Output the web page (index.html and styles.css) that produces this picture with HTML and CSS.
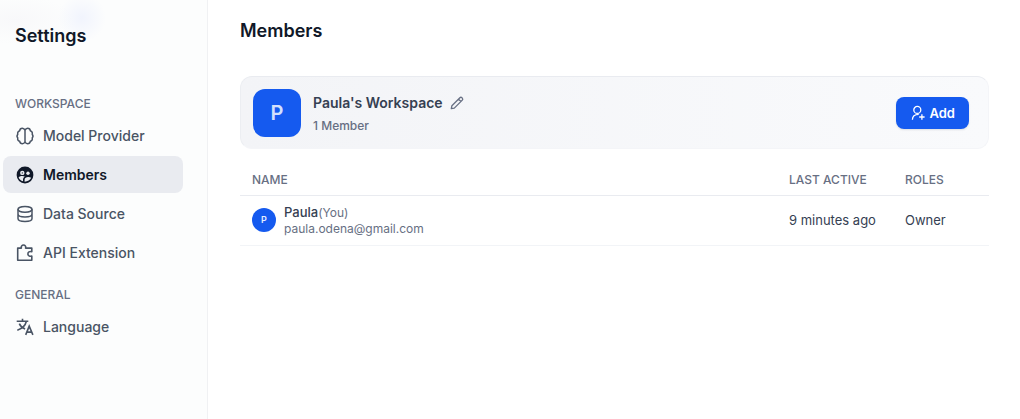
FILE: index.html
```html
<!DOCTYPE html>
<html lang="en">
<head>
<meta charset="utf-8">
<meta name="viewport" content="width=device-width, initial-scale=1">
<title>Settings – Members</title>
<link rel="stylesheet" href="styles.css">
</head>
<body>
<div class="settings">
  <aside class="sidebar">
    <h1 class="sidebar-title">Settings</h1>
    <nav class="nav">
      <section class="nav-group">
        <h2 class="nav-label">WORKSPACE</h2>
        <a class="nav-item" href="#provider">
          <svg class="nav-icon" viewBox="0 0 20 20" fill="none" stroke="currentColor" stroke-width="1.5" stroke-linejoin="round" aria-hidden="true">
            <path d="M10 4.3C9.5 2.9 8.4 2.3 7.4 2.3 5.8 2.3 4.8 3.4 4.7 4.8 3 5.3 2.3 6.700 2.800 8.200 1.900 9.300 1.900 10.900 2.800 11.900 2.300 13.500 3.100 14.900 4.700 15.300 4.900 16.800 5.900 17.700 7.400 17.700 8.500 17.700 9.500 17 10 15.700 10.500 17 11.500 17.700 12.600 17.700 14.100 17.700 15.100 16.800 15.300 15.300 16.900 14.900 17.700 13.500 17.200 11.900 18.100 10.900 18.100 9.300 17.200 8.200 17.700 6.700 17 5.300 15.300 4.800 15.200 3.400 14.200 2.300 12.600 2.300 11.600 2.300 10.500 2.900 10 4.300V15.700"/>
          </svg>
          <span>Model Provider</span>
        </a>
        <a class="nav-item active" href="#members" aria-current="page">
          <svg class="nav-icon" viewBox="0 0 20 20" aria-hidden="true">
            <circle cx="10" cy="10" r="8.4" fill="currentColor"/>
            <g fill="#e9ebf0">
              <circle cx="7.300" cy="7.900" r="2.200"/>
              <circle cx="13" cy="8.300" r="1.700"/>
              <path d="M3.600 12.200C4.600 11.200 6 10.900 7.300 10.900 8.300 10.900 9.100 11.100 9.800 11.400 8.500 12.300 8 13.500 8 14.700V16.300C5.900 15.700 4.200 14.200 3.600 12.200ZM9.600 16.700V14.700C9.600 13 11.300 12 13.200 12 14.400 12 15.400 12.300 16.200 12.800 15.200 15.100 12.700 16.700 9.600 16.700Z"/>
            </g>
            <circle cx="7.300" cy="7.900" r=".6" fill="currentColor"/>
          </svg>
          <span>Members</span>
        </a>
        <a class="nav-item" href="#data-source">
          <svg class="nav-icon" viewBox="0 0 20 20" fill="none" stroke="currentColor" stroke-width="1.500" aria-hidden="true">
            <ellipse cx="10" cy="5.300" rx="7" ry="2.900"/>
            <path d="M3 5.300V14.600C3 16.300 6.100 17.600 10 17.600S17 16.300 17 14.600V5.300M3 10C3 11.700 6.100 13 10 13S17 11.700 17 10"/>
          </svg>
          <span>Data Source</span>
        </a>
        <a class="nav-item" href="#api-extension">
          <svg class="nav-icon" viewBox="0 0 20 20" fill="none" stroke="currentColor" stroke-width="1.600" stroke-linejoin="round" aria-hidden="true">
            <path d="M2.700 5.100H6.400C5.900 3.300 7 2 8.500 2S11.100 3.300 10.600 5.100H16.800V8.700C14.500 8 12.900 9.200 12.900 10.900S14.500 13.700 16.800 13.100V17.200H2.700Z"/>
          </svg>
          <span>API Extension</span>
        </a>
      </section>
      <section class="nav-group">
        <h2 class="nav-label">GENERAL</h2>
        <a class="nav-item" href="#language">
          <svg class="nav-icon" viewBox="0 0 20 20" fill="none" stroke="currentColor" stroke-width="1.600" aria-hidden="true">
            <path d="M1.700 4.200H13.300M7.500 1.700V4.200M11.400 4.200C10.500 8 7.100 11.600 2.300 13.200M4.300 6.600C5.400 9.100 7.400 11 10.100 12.100M10.700 17.900 14.200 9.100 17.900 17.900M11.900 15.100H16.700"/>
          </svg>
          <span>Language</span>
        </a>
      </section>
    </nav>
  </aside>

  <main class="content">
    <h2 class="page-title">Members</h2>
    <section class="workspace">
      <div class="workspace-avatar" aria-hidden="true">P</div>
      <div class="workspace-info">
        <div class="workspace-name">
          <span>Paula's Workspace</span>
          <button class="edit" type="button" aria-label="Edit workspace name">
            <svg class="edit-icon" viewBox="0 0 16 16" fill="none" stroke="currentColor" stroke-width="1.300" stroke-linejoin="round" aria-hidden="true">
              <path d="M2.300 13.700 2.900 10.700 10.900 2.700C11.500 2.100 12.300 2.100 12.900 2.700L13.300 3.100C13.900 3.700 13.900 4.500 13.300 5.100L5.300 13.100ZM9.500 4.100 11.900 6.500"/>
            </svg>
          </button>
        </div>
        <div class="workspace-count">1 Member</div>
      </div>
      <button class="add" type="button">
        <svg class="add-icon" viewBox="0 0 16 16" fill="none" stroke="currentColor" stroke-width="1.300" aria-hidden="true">
          <circle cx="7.300" cy="4.900" r="3.500"/>
          <path d="M2.400 14.800C2.400 11.500 4.500 9.300 8.700 9.300M11.900 9.300V14.700M9.200 12H14.600"/>
        </svg>
        <span>Add</span>
      </button>
    </section>

    <table class="members">
      <thead>
        <tr>
          <th scope="col">NAME</th>
          <th class="col-active" scope="col">LAST ACTIVE</th>
          <th class="col-role" scope="col">ROLES</th>
        </tr>
      </thead>
      <tbody>
        <tr>
          <td>
            <div class="member">
              <span class="member-avatar" aria-hidden="true">P</span>
              <div>
                <div class="member-name">Paula<span class="member-you">(You)</span></div>
                <div class="member-email">paula.odena@gmail.com</div>
              </div>
            </div>
          </td>
          <td>9 minutes ago</td>
          <td>Owner</td>
        </tr>
      </tbody>
    </table>
  </main>
</div>
</body>
</html>
```
FILE: styles.css
```css
*, *::before, *::after { box-sizing: border-box; }

body {
  margin: 0;
  background: #fff;
  color: #354052;
  font-family: Inter, "Liberation Sans", sans-serif;
  font-size: 13px;
  line-height: 16px;
}

h1, h2 { margin: 0; }

button {
  border: 0;
  font: inherit;
  cursor: pointer;
}

svg { display: block; flex: none; }

.settings {
  display: flex;
  min-height: 100vh;
}

.sidebar {
  flex: none;
  width: 208px;
  padding: 24px 24px 24px 3px;
  border-right: 1px solid #f0f1f3;
  background:
    radial-gradient(circle at 82px 18px, #f1f4fd 0, rgba(241, 244, 253, 0) 24px),
    radial-gradient(ellipse 60px 24px at 16px 20px, #f8f8fa, rgba(248, 248, 250, 0)),
    #fcfdfd;
}

.sidebar-title {
  margin: 0 12px 48px;
  color: #101828;
  font-size: 18px;
  font-weight: 600;
  line-height: 24px;
}

.nav {
  display: flex;
  flex-direction: column;
  gap: 16px;
}

.nav-group {
  display: flex;
  flex-direction: column;
  gap: 2px;
}

.nav-label {
  margin: 0 12px;
  padding: 0 0 4px;
  color: #676f83;
  font-size: 12px;
  font-weight: 500;
  line-height: 15px;
}

.nav-item {
  display: flex;
  align-items: center;
  gap: 8px;
  height: 37px;
  padding: 0 12px;
  border-radius: 8px;
  color: #495464;
  font-size: 14px;
  font-weight: 500;
  text-decoration: none;
}

.nav-item.active {
  background: #e9ebf0;
  color: #101828;
  font-weight: 600;
}

.nav-icon { width: 20px; height: 20px; }

.content {
  flex: 1;
  min-width: 0;
  padding: 19px 31px 24px 32px;
}

.page-title {
  margin-bottom: 33px;
  color: #101828;
  font-size: 18px;
  font-weight: 600;
  line-height: 24px;
}

.workspace {
  display: flex;
  align-items: center;
  gap: 12px;
  padding: 12px 19px 11px 12px;
  border: 1px solid #f4f5f8;
  border-top-color: #e9ebf0;
  border-left-color: #eceef2;
  border-radius: 12px;
  background: linear-gradient(90deg, #f3f4f7, #f9fafc);
}

.workspace-avatar {
  display: grid;
  place-items: center;
  width: 48px;
  height: 48px;
  border-radius: 12px;
  background: #155aef;
  color: #d3e0fc;
  font-size: 20px;
  font-weight: 600;
}

.workspace-info { flex: 1; }

.workspace-name {
  display: flex;
  align-items: center;
  gap: 6px;
  margin-bottom: 5px;
  font-size: 14px;
  font-weight: 600;
  line-height: 20px;
}

.edit {
  padding: 0;
  background: none;
  color: #676f83;
}

.edit-icon { width: 16px; height: 16px; }

.workspace-count {
  color: #676f83;
  font-size: 12px;
  font-weight: 500;
}

.add {
  display: flex;
  align-items: center;
  gap: 4px;
  height: 32px;
  padding: 0 14px;
  border-radius: 8px;
  background: #155aef;
  box-shadow: 0 1px 2px rgba(16, 24, 40, 0.12);
  color: #fff;
  font-size: 13px;
  font-weight: 600;
}

.add-icon { width: 16px; height: 16px; }

.members {
  width: 100%;
  margin-top: 16px;
  border-collapse: separate;
  border-spacing: 0;
  table-layout: fixed;
}

.members th {
  height: 31px;
  padding: 0 12px;
  border-bottom: 1px solid #e9ebf0;
  color: #676f83;
  font-size: 12px;
  font-weight: 500;
  text-align: left;
}

.members td {
  height: 50px;
  padding: 0 12px 1px;
  border-bottom: 1px solid #f2f4f7;
}

.members .col-active { width: 116px; }
.members .col-role { width: 96px; }

.member {
  display: flex;
  align-items: center;
  gap: 8px;
}

.member-avatar {
  display: grid;
  place-items: center;
  width: 24px;
  height: 24px;
  border-radius: 50%;
  background: #155aef;
  color: #e6eefd;
  font-size: 9px;
  font-weight: 600;
}

.member-name { font-weight: 500; }

.member-you {
  color: #676f83;
  font-size: 12px;
  font-weight: 400;
}

.member-email {
  color: #676f83;
  font-size: 12px;
}
```
